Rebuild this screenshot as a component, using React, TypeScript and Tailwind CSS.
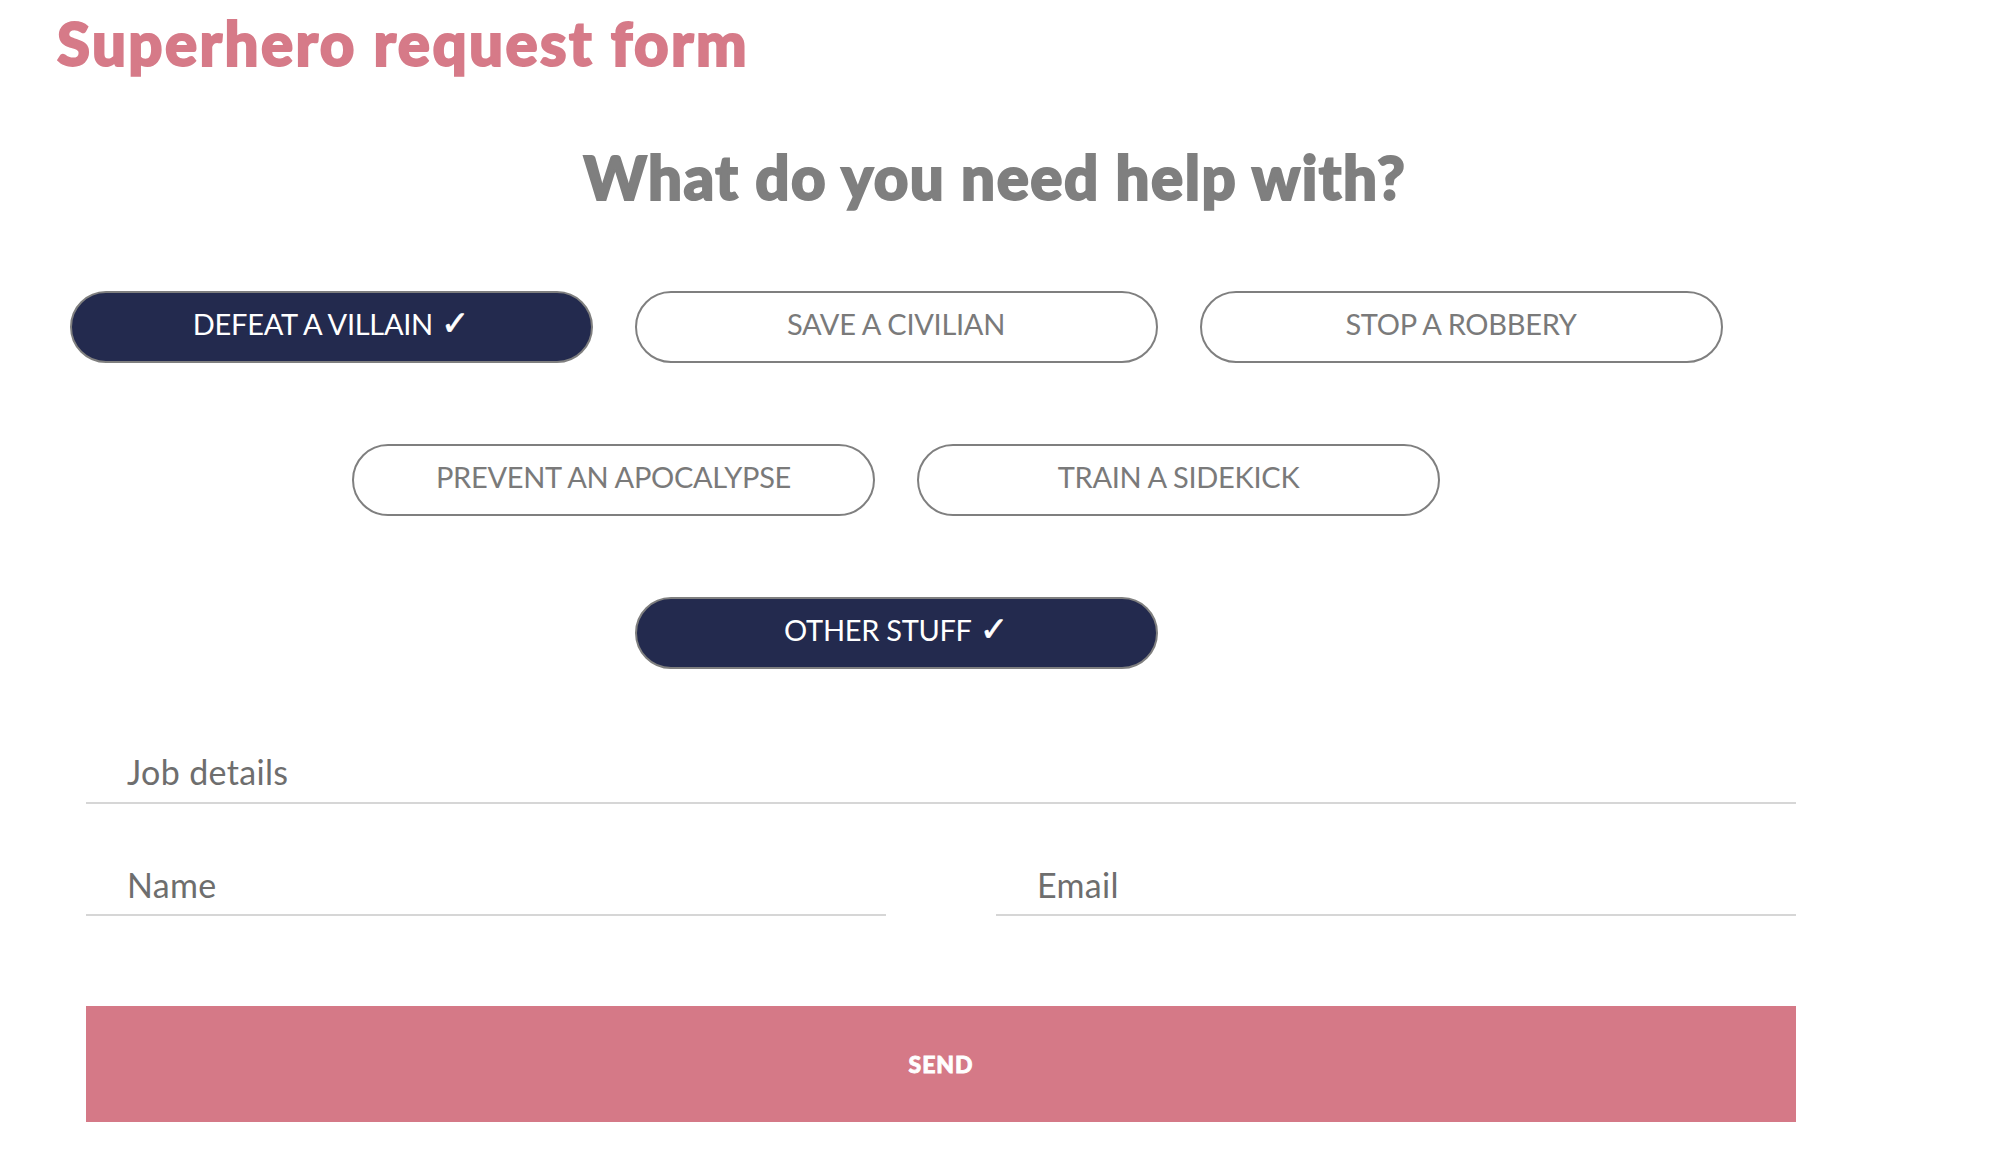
import React from "react";

const rows: { label: string; selected: boolean }[][] = [
  [
    { label: "DEFEAT A VILLAIN", selected: true },
    { label: "SAVE A CIVILIAN", selected: false },
    { label: "STOP A ROBBERY", selected: false },
  ],
  [
    { label: "PREVENT AN APOCALYPSE", selected: false },
    { label: "TRAIN A SIDEKICK", selected: false },
  ],
  [{ label: "OTHER STUFF", selected: true }],
];

function Choice({ label, selected }: { label: string; selected: boolean }) {
  return (
    <button
      type="button"
      className={
        selected
          ? "flex h-[72px] w-[523px] items-center justify-center rounded-full border-2 border-[#7f7f7f] bg-[#232a4e] pb-[8px] text-[29px] leading-[29px] tracking-[-0.01em] text-white"
          : "flex h-[72px] w-[523px] items-center justify-center rounded-full border-2 border-[#7f7f7f] bg-white pb-[8px] text-[29px] leading-[29px] tracking-[-0.01em] text-[#7a7a7a]"
      }
    >
      <span>{label}</span>
      {selected && (
        <span className="ml-[8px] font-['DejaVu_Sans',sans-serif] text-[34px] font-bold leading-[29px] [-webkit-text-stroke:0.6px_#ffffff]">
          ✓
        </span>
      )}
    </button>
  );
}

export default function App() {
  return (
    <div className="min-h-screen w-full bg-white font-['Lato',sans-serif]">
      <h1 className="pl-[57px] pt-[13px] text-[60px] font-black leading-[60px] tracking-[0.04em] text-[#d67a88] [-webkit-text-stroke:2px_#d67a88]">
        Superhero request form
      </h1>

      <h2 className="mt-[74px] text-center text-[60px] font-black leading-[60px] tracking-[0.025em] text-[#7f7f7f] [-webkit-text-stroke:2px_#7f7f7f]">
        What do you need help with?
      </h2>

      <div className="mt-[84px] flex w-[1792px] flex-col gap-[81px]">
        {rows.map((row, i) => (
          <div key={i} className="flex justify-center gap-[42px]">
            {row.map((c) => (
              <Choice key={c.label} label={c.label} selected={c.selected} />
            ))}
          </div>
        ))}
      </div>

      <form className="ml-[86px] mt-[86px] w-[1710px]">
        <div className="border-b-2 border-[#d6d6d6] pb-[13px] pl-[41px] text-[34px] leading-[34px] tracking-[0.01em] text-[#6e6e6e]">
          Job details
        </div>
        <div className="mt-[64px] flex gap-[110px]">
          <div className="w-[800px] border-b-2 border-[#d6d6d6] pb-[12px] pl-[41px] text-[34px] leading-[34px] tracking-[0.01em] text-[#6e6e6e]">
            Name
          </div>
          <div className="w-[800px] border-b-2 border-[#d6d6d6] pb-[12px] pl-[41px] text-[34px] leading-[34px] tracking-[0.01em] text-[#6e6e6e]">
            Email
          </div>
        </div>
        <button
          type="button"
          className="mt-[90px] flex h-[116px] w-full items-center justify-center bg-[#d57987] text-[23px] font-black tracking-[0.04em] text-white [-webkit-text-stroke:0.8px_#ffffff]"
        >
          SEND
        </button>
      </form>
    </div>
  );
}
